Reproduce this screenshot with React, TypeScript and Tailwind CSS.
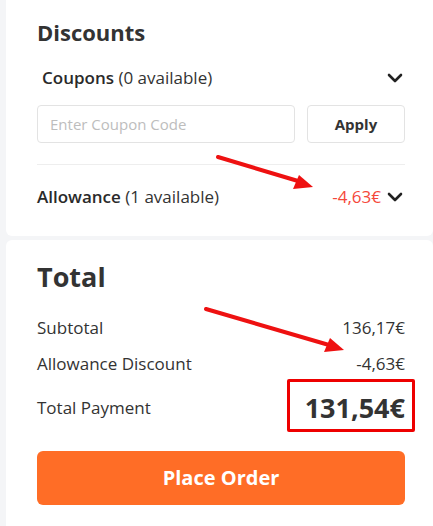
import React from 'react';

const Chevron = () => (
  <svg width="16" height="10" viewBox="0 0 16 10" fill="none" className="shrink-0">
    <path d="M2 2l6 6 6-6" stroke="#222" strokeWidth="2.6" strokeLinecap="round" strokeLinejoin="round" />
  </svg>
);

const Row: React.FC<{ label: string; value: string }> = ({ label, value }) => (
  <div className="flex justify-between items-center h-9 text-[17px] text-[#333]">
    <span>{label}</span>
    <span>{value}</span>
  </div>
);

export default function App() {
  return (
    <div
      className="relative min-h-screen bg-[#f4f5f7] pl-[6px]"
      style={{ fontFamily: '"Open Sans", "Noto Sans", sans-serif' }}
    >
      <section className="bg-white rounded-b-[6px] pl-[31px] pr-[28px] pt-[16px] h-[236px]">
        <h2 className="text-[22px] font-bold text-[#333] leading-[32px]">Discounts</h2>
        <div className="flex items-center justify-between mt-[15px] pl-[5px] pr-[2px] h-[30px]">
          <span className="text-[17px] text-[#333]">
            <span className="font-semibold text-[#2a2a2a]">Coupons</span> (0 available)
          </span>
          <Chevron />
        </div>
        <div className="flex gap-[12px] mt-[12px]">
          <input
            className="flex-1 h-[38px] rounded-[4px] border border-[#e3e3e3] px-[12px] text-[15px] placeholder:text-[#bdbdbd] outline-none"
            placeholder="Enter Coupon Code"
          />
          <button className="w-[98px] h-[38px] rounded-[4px] border border-[#e3e3e3] text-[15px] font-bold text-[#333]">
            Apply
          </button>
        </div>
        <div className="border-t border-[#eeeeee] mt-[21px]" />
        <div className="flex items-center justify-between pr-[2px] h-[64px]">
          <span className="text-[17px] text-[#333]">
            <span className="font-semibold text-[#2a2a2a]">Allowance</span> (1 available)
          </span>
          <div className="flex items-center gap-[6px]">
            <span className="text-[17px] text-[#f5483b]">-4,63€</span>
            <Chevron />
          </div>
        </div>
      </section>

      <section className="bg-white rounded-t-[6px] mt-[4px] pl-[31px] pr-[28px] pt-[20px] pb-[21px]">
        <h2 className="text-[27px] font-bold text-[#333] leading-[34px]">Total</h2>
        <div className="mt-[16px]">
          <Row label="Subtotal" value="136,17€" />
          <Row label="Allowance Discount" value="-4,63€" />
          <div className="flex justify-between items-center h-[52px] text-[#333]">
            <span className="text-[17px]">Total Payment</span>
            <span className="text-[27px] font-bold">131,54€</span>
          </div>
        </div>
        <button className="w-full h-[54px] mt-[17px] rounded-[6px] bg-[#ff6d26] text-white text-[20px] font-bold">
          Place Order
        </button>
      </section>

      <div className="absolute left-[287px] top-[379px] w-[128px] h-[53px] border-[3px] border-[#ee0000] rounded-[2px] pointer-events-none" />

      <svg className="absolute left-0 top-0 pointer-events-none" width="433" height="526">
        <line x1="218" y1="157" x2="298" y2="181" stroke="#ee1111" strokeWidth="4" strokeLinecap="round" />
        <polygon points="313,187 293,189 299,175" fill="#ee1111" />
        <line x1="206" y1="309" x2="329" y2="345" stroke="#ee1111" strokeWidth="4" strokeLinecap="round" />
        <polygon points="344,350 324,352 330,338" fill="#ee1111" />
      </svg>
    </div>
  );
}
